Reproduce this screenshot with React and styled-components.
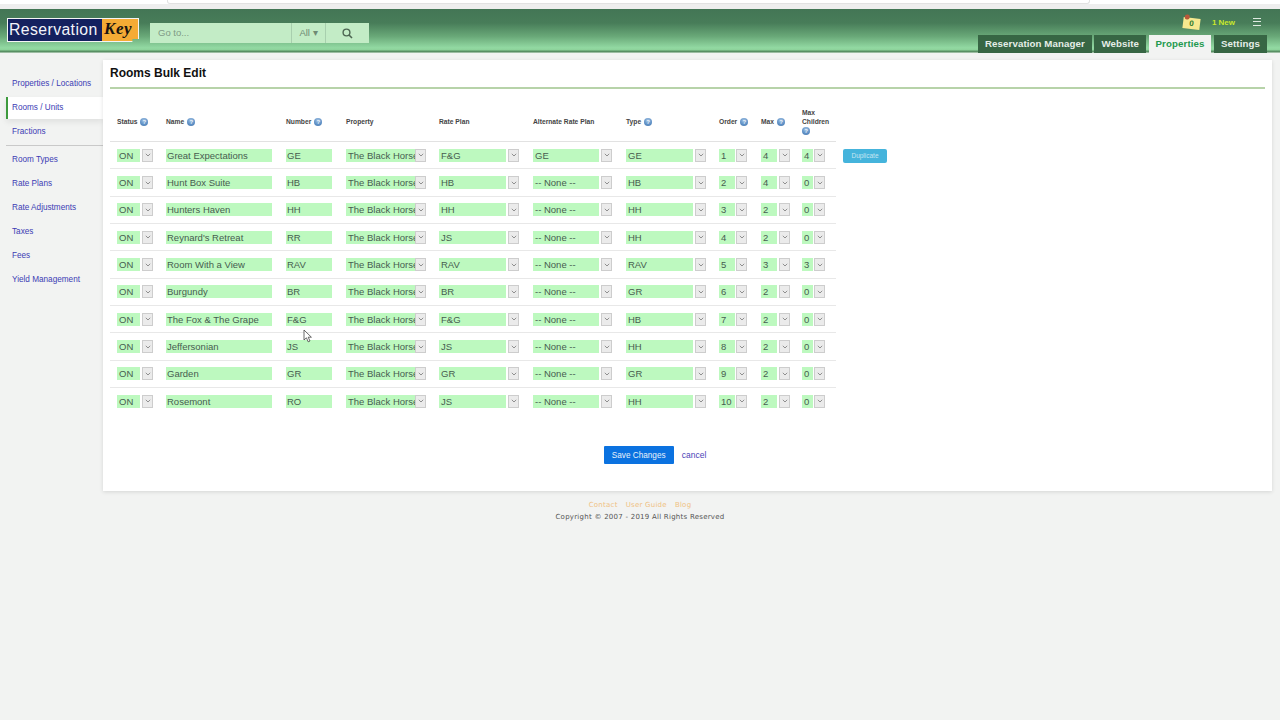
import React from "react";
import styled, { createGlobalStyle } from "styled-components";

const rooms = [
  { name: "Great Expectations", num: "GE", rate: "F&G", alt: "GE", type: "GE", order: 1, max: 4, kids: 4 },
  { name: "Hunt Box Suite", num: "HB", rate: "HB", alt: "-- None --", type: "HB", order: 2, max: 4, kids: 0 },
  { name: "Hunters Haven", num: "HH", rate: "HH", alt: "-- None --", type: "HH", order: 3, max: 2, kids: 0 },
  { name: "Reynard's Retreat", num: "RR", rate: "JS", alt: "-- None --", type: "HH", order: 4, max: 2, kids: 0 },
  { name: "Room With a View", num: "RAV", rate: "RAV", alt: "-- None --", type: "RAV", order: 5, max: 3, kids: 3 },
  { name: "Burgundy", num: "BR", rate: "BR", alt: "-- None --", type: "GR", order: 6, max: 2, kids: 0 },
  { name: "The Fox & The Grape", num: "F&G", rate: "F&G", alt: "-- None --", type: "HB", order: 7, max: 2, kids: 0 },
  { name: "Jeffersonian", num: "JS", rate: "JS", alt: "-- None --", type: "HH", order: 8, max: 2, kids: 0 },
  { name: "Garden", num: "GR", rate: "GR", alt: "-- None --", type: "GR", order: 9, max: 2, kids: 0 },
  { name: "Rosemont", num: "RO", rate: "JS", alt: "-- None --", type: "HH", order: 10, max: 2, kids: 0 },
];

const sideGroups = [
  ["Properties / Locations", "Rooms / Units", "Fractions"],
  ["Room Types", "Rate Plans", "Rate Adjustments", "Taxes", "Fees", "Yield Management"],
];

const GRID = "49px 120px 60px 93px 94px 93px 93px 42px 41px 34px";

const Global = createGlobalStyle`
  html, body { margin: 0; padding: 0; background: #f2f3f2; }
  body { font-family: "Liberation Sans", Arial, sans-serif; height: 720px; overflow: hidden; }
`;

const Page = styled.div`
  position: relative;
  width: 1280px;
  height: 720px;
`;

const BrowserStrip = styled.div`
  height: 9px;
  background: linear-gradient(#fff 0, #fff 44%, #eeeeee 44%, #eeeeee 100%);
  display: flex;
  padding-left: 167px;
`;

const UrlBar = styled.div`
  width: 921px;
  height: 3px;
  background: #fff;
  border: 1px solid #e2e2e2;
  border-top: 0;
  border-radius: 0 0 3px 3px;
`;

const Header = styled.header`
  height: 44px;
  display: flex;
  justify-content: space-between;
  background: linear-gradient(#437655 0, #487d59 32%, #69a878 62%, #92d9a2 88%, #8ed49c 92%, #54895f 97%, #c8dccb 100%);
`;

const HeaderLeft = styled.div`
  display: flex;
  align-items: flex-start;
  padding: 9px 0 0 7px;
`;

const Logo = styled.div`
  width: 132px;
  height: 24px;
  box-sizing: border-box;
  display: flex;
  border: 1px solid #f4f4f4;
  clip-path: polygon(0 0, 100% 0, 100% 88%, 95% 88%, 95% 100%, 0 100%);
`;

const LogoLeft = styled.div`
  width: 94px;
  background: #14215f;
  color: #f2f4fa;
  font-size: 15.8px;
  line-height: 21px;
  letter-spacing: 0.4px;
  padding-left: 1px;
  box-sizing: border-box;
  white-space: nowrap;
  overflow: hidden;
`;

const LogoRight = styled.div`
  flex: 1;
  background: #f5ab35;
  color: #1a1410;
  font-family: "Liberation Serif", serif;
  font-style: italic;
  font-weight: 700;
  font-size: 17px;
  line-height: 20px;
  letter-spacing: 0.6px;
  padding-left: 2px;
`;

const Search = styled.div`
  display: flex;
  height: 20px;
  margin: 5px 0 0 11px;
  background: #c3ecc6;
  color: #6f8a74;
  font-size: 9.5px;
  line-height: 20px;
`;

const SearchInput = styled.div`
  width: 133px;
  padding-left: 8px;
  color: #809a85;
  border-right: 1px solid #a8cfae;
`;

const SearchAll = styled.div`
  width: 33px;
  text-align: center;
  border-right: 1px solid #a8cfae;
`;

const SearchGo = styled.div`
  width: 43px;
  display: flex;
  align-items: center;
  justify-content: center;
`;

const HeaderRight = styled.div`
  display: flex;
  flex-direction: column;
  align-items: flex-end;
  padding-right: 13px;
`;

const Notices = styled.div`
  height: 26px;
  display: flex;
  align-items: center;
  padding-right: 6px;
`;

const Note = styled.div`
  position: relative;
  width: 17px;
  height: 11px;
  margin-top: 2px;
  background: #f6e98f;
  transform: rotate(7deg);
  color: #2c7a2c;
  font-size: 8px;
  font-weight: 700;
  line-height: 11px;
  text-align: center;
  &::before {
    content: "";
    position: absolute;
    left: 1px;
    top: -3px;
    width: 5px;
    height: 5px;
    border-radius: 50%;
    background: #b9583a;
  }
`;

const NewCount = styled.div`
  color: #c8e82c;
  font-size: 8px;
  font-weight: 700;
  margin-left: 12px;
`;

const Burger = styled.div`
  position: relative;
  width: 8px;
  height: 6px;
  margin-left: 18px;
  border-top: 1px solid #dfeae1;
  border-bottom: 1px solid #dfeae1;
  &::after {
    content: "";
    position: absolute;
    left: 0;
    right: 0;
    top: 2px;
    height: 1px;
    background: #dfeae1;
  }
`;

const Tabs = styled.nav`
  display: flex;
  gap: 2.5px;
`;

const Tab = styled.div`
  height: 18px;
  padding: 0 7px;
  line-height: 18px;
  font-size: 9.7px;
  font-weight: 700;
  letter-spacing: 0.1px;
  white-space: nowrap;
  background: ${(p) => (p.$active ? "#f2f3f2" : "#376644")};
  color: ${(p) => (p.$active ? "#1f9a4f" : "#e6eee8")};
`;

const Body = styled.div`
  display: flex;
  align-items: flex-start;
  padding-top: 7px;
`;

const Side = styled.aside`
  width: 103px;
  padding: 12px 0 0 6px;
  box-sizing: border-box;
  flex-shrink: 0;
`;

const SideGroup = styled.div`
  &:first-child {
    border-bottom: 1px solid #c9c9c9;
    padding-bottom: 1px;
    margin-bottom: 2px;
  }
`;

const SideItem = styled.div`
  height: ${(p) => (p.$active ? "22px" : "24px")};
  line-height: ${(p) => (p.$active ? "22px" : "24px")};
  margin: ${(p) => (p.$active ? "1px 0" : "0")};
  font-size: 8.2px;
  color: #3c3cb4;
  white-space: nowrap;
  padding-left: ${(p) => (p.$active ? "4px" : "6px")};
  ${(p) =>
    p.$active &&
    `border-left: 2px solid #3d9a3d;
     background: #fff;
     box-shadow: 0 3px 6px rgba(0,0,0,0.08);`}
`;

const Card = styled.main`
  width: 1169px;
  height: 431px;
  background: #fff;
  padding: 0 7px;
  box-sizing: border-box;
  box-shadow: 0 1px 4px rgba(0,0,0,0.12);
`;

const Title = styled.h1`
  margin: 0;
  height: 27px;
  line-height: 27px;
  font-size: 12px;
  font-weight: 700;
  color: #111;
  border-bottom: 2px solid #b7d3a9;
`;

const Table = styled.div`
  width: 726px;
  margin-top: 12px;
`;

const HeadRow = styled.div`
  display: grid;
  grid-template-columns: ${GRID};
  height: 40px;
  padding-left: 7px;
  align-items: center;
  border-bottom: 1px solid #e2e2e2;
`;

const HeadCell = styled.div`
  font-size: 6.7px;
  font-weight: 700;
  line-height: 9px;
  color: #444;
`;

const Help = styled.span`
  display: inline-flex;
  align-items: center;
  justify-content: center;
  width: 8px;
  height: 8px;
  margin-left: ${(p) => (p.$flush ? 0 : "3px")};
  border-radius: 50%;
  background: radial-gradient(circle at 50% 30%, #9fc0e2 0, #5e90c6 60%, #4474a8 100%);
  color: #eaf2fa;
  font-size: 6px;
  font-weight: 700;
  line-height: 8px;
`;

const Row = styled.div`
  position: relative;
  display: grid;
  grid-template-columns: ${GRID};
  height: 27.35px;
  padding-left: 7px;
  align-items: center;
  box-sizing: border-box;
  border-bottom: 1px solid ${(p) => (p.$last ? "transparent" : "#e8e8e8")};
`;

const Field = styled.div`
  height: 13px;
  line-height: 13px;
  background: #bdf9bf;
  color: #475c50;
  font-size: 9.5px;
  padding-left: 1px;
  white-space: nowrap;
  overflow: hidden;
  width: ${(p) => p.$w}px;
`;

const SelectBox = styled.div`
  display: flex;
  align-items: center;
  width: ${(p) => p.$w}px;
  height: 13px;
  color: #475c50;
  font-size: 9.5px;
  line-height: 13px;
  white-space: nowrap;
`;

const SelectText = styled.span`
  flex: 1;
  min-width: 0;
  height: 13px;
  padding-left: 2px;
  background: #bdf9bf;
  overflow: hidden;
`;

const Caret = styled.span`
  flex: 0 0 11px;
  height: 13px;
  margin-left: ${(p) => p.$gap}px;
  box-sizing: border-box;
  background: #ebebeb;
  border: 1px solid #cdcdcd;
  display: flex;
  align-items: center;
  justify-content: center;
`;

const Duplicate = styled.button`
  position: absolute;
  left: 733px;
  top: 6.5px;
  width: 44px;
  height: 14px;
  padding: 0;
  border: 0;
  border-radius: 2px;
  background: #45b4dc;
  color: #c6e6f2;
  font: 6.5px "Liberation Sans", sans-serif;
`;

const Actions = styled.div`
  display: flex;
  align-items: center;
  justify-content: center;
  gap: 8px;
  width: 1090px;
  margin-top: 31px;
`;

const SaveButton = styled.button`
  width: 70px;
  height: 18px;
  padding: 0;
  border: 0;
  border-radius: 1px;
  background: #0b72e0;
  color: #e8f1fb;
  font: 8.2px "Liberation Sans", sans-serif;
`;

const CancelLink = styled.a`
  color: #4a44b8;
  font-size: 8.5px;
`;

const Footer = styled.footer`
  margin-top: 8px;
  text-align: center;
  font-family: "DejaVu Sans", sans-serif;
  font-size: 7px;
  letter-spacing: 0.25px;
  line-height: 12px;
  color: #555;
`;

const FooterLinks = styled.div`
  color: #f0c284;
  display: flex;
  justify-content: center;
  gap: 8px;
`;

const Cursor = styled.svg`
  position: absolute;
  left: 303px;
  top: 329px;
`;

const Chevron = () => (
  <svg width="6" height="4" viewBox="0 0 6 4">
    <path d="M0.8 0.8 L3 3 L5.2 0.8" fill="none" stroke="#777" strokeWidth="0.8" />
  </svg>
);

const Select = ({ w, value, gap = 2 }) => (
  <SelectBox $w={w}>
    <SelectText>{value}</SelectText>
    <Caret $gap={gap}><Chevron /></Caret>
  </SelectBox>
);

export default function App() {
  return (
    <Page>
      <Global />
      <BrowserStrip><UrlBar /></BrowserStrip>
      <Header>
        <HeaderLeft>
          <Logo>
            <LogoLeft>Reservation</LogoLeft>
            <LogoRight>Key</LogoRight>
          </Logo>
          <Search>
            <SearchInput>Go to...</SearchInput>
            <SearchAll>All ▾</SearchAll>
            <SearchGo>
              <svg width="11" height="11" viewBox="0 0 11 11">
                <circle cx="4.5" cy="4.5" r="3.4" fill="none" stroke="#4d6652" strokeWidth="1.4" />
                <path d="M7 7 L10 10" stroke="#4d6652" strokeWidth="1.6" />
              </svg>
            </SearchGo>
          </Search>
        </HeaderLeft>
        <HeaderRight>
          <Notices>
            <Note>0</Note>
            <NewCount>1 New</NewCount>
            <Burger />
          </Notices>
          <Tabs>
            <Tab>Reservation Manager</Tab>
            <Tab>Website</Tab>
            <Tab $active>Properties</Tab>
            <Tab>Settings</Tab>
          </Tabs>
        </HeaderRight>
      </Header>
      <Body>
        <Side>
          {sideGroups.map((group, i) => (
            <SideGroup key={i}>
              {group.map((item) => (
                <SideItem key={item} $active={item === "Rooms / Units"}>{item}</SideItem>
              ))}
            </SideGroup>
          ))}
        </Side>
        <Card>
          <Title>Rooms Bulk Edit</Title>
          <Table>
            <HeadRow>
              <HeadCell>Status<Help>?</Help></HeadCell>
              <HeadCell>Name<Help>?</Help></HeadCell>
              <HeadCell>Number<Help>?</Help></HeadCell>
              <HeadCell>Property</HeadCell>
              <HeadCell>Rate Plan</HeadCell>
              <HeadCell>Alternate Rate Plan</HeadCell>
              <HeadCell>Type<Help>?</Help></HeadCell>
              <HeadCell>Order<Help>?</Help></HeadCell>
              <HeadCell>Max<Help>?</Help></HeadCell>
              <HeadCell>Max<br />Children<br /><Help $flush>?</Help></HeadCell>
            </HeadRow>
            {rooms.map((room, i) => (
              <Row key={room.name} $last={i === rooms.length - 1}>
                <Select w={36} value="ON" />
                <Field $w={105}>{room.name}</Field>
                <Field $w={45}>{room.num}</Field>
                <Select w={80} value="The Black Horse Inn" gap={0} />
                <Select w={80} value={room.rate} />
                <Select w={79} value={room.alt} />
                <Select w={80} value={room.type} />
                <Select w={28} value={room.order} gap={1} />
                <Select w={29} value={room.max} />
                <Select w={23} value={room.kids} gap={1} />
                {i === 0 && <Duplicate>Duplicate</Duplicate>}
              </Row>
            ))}
          </Table>
          <Actions>
            <SaveButton>Save Changes</SaveButton>
            <CancelLink>cancel</CancelLink>
          </Actions>
        </Card>
      </Body>
      <Footer>
        <FooterLinks><span>Contact</span><span>User Guide</span><span>Blog</span></FooterLinks>
        <div>Copyright © 2007 - 2019 All Rights Reserved</div>
      </Footer>
      <Cursor width="10" height="14" viewBox="0 0 10 14">
        <path d="M1 1 L1 11 L3.4 8.8 L5.2 12.8 L7 12 L5.2 8.2 L8.4 8.2 Z" fill="#fff" stroke="#444" strokeWidth="0.8" />
      </Cursor>
    </Page>
  );
}
